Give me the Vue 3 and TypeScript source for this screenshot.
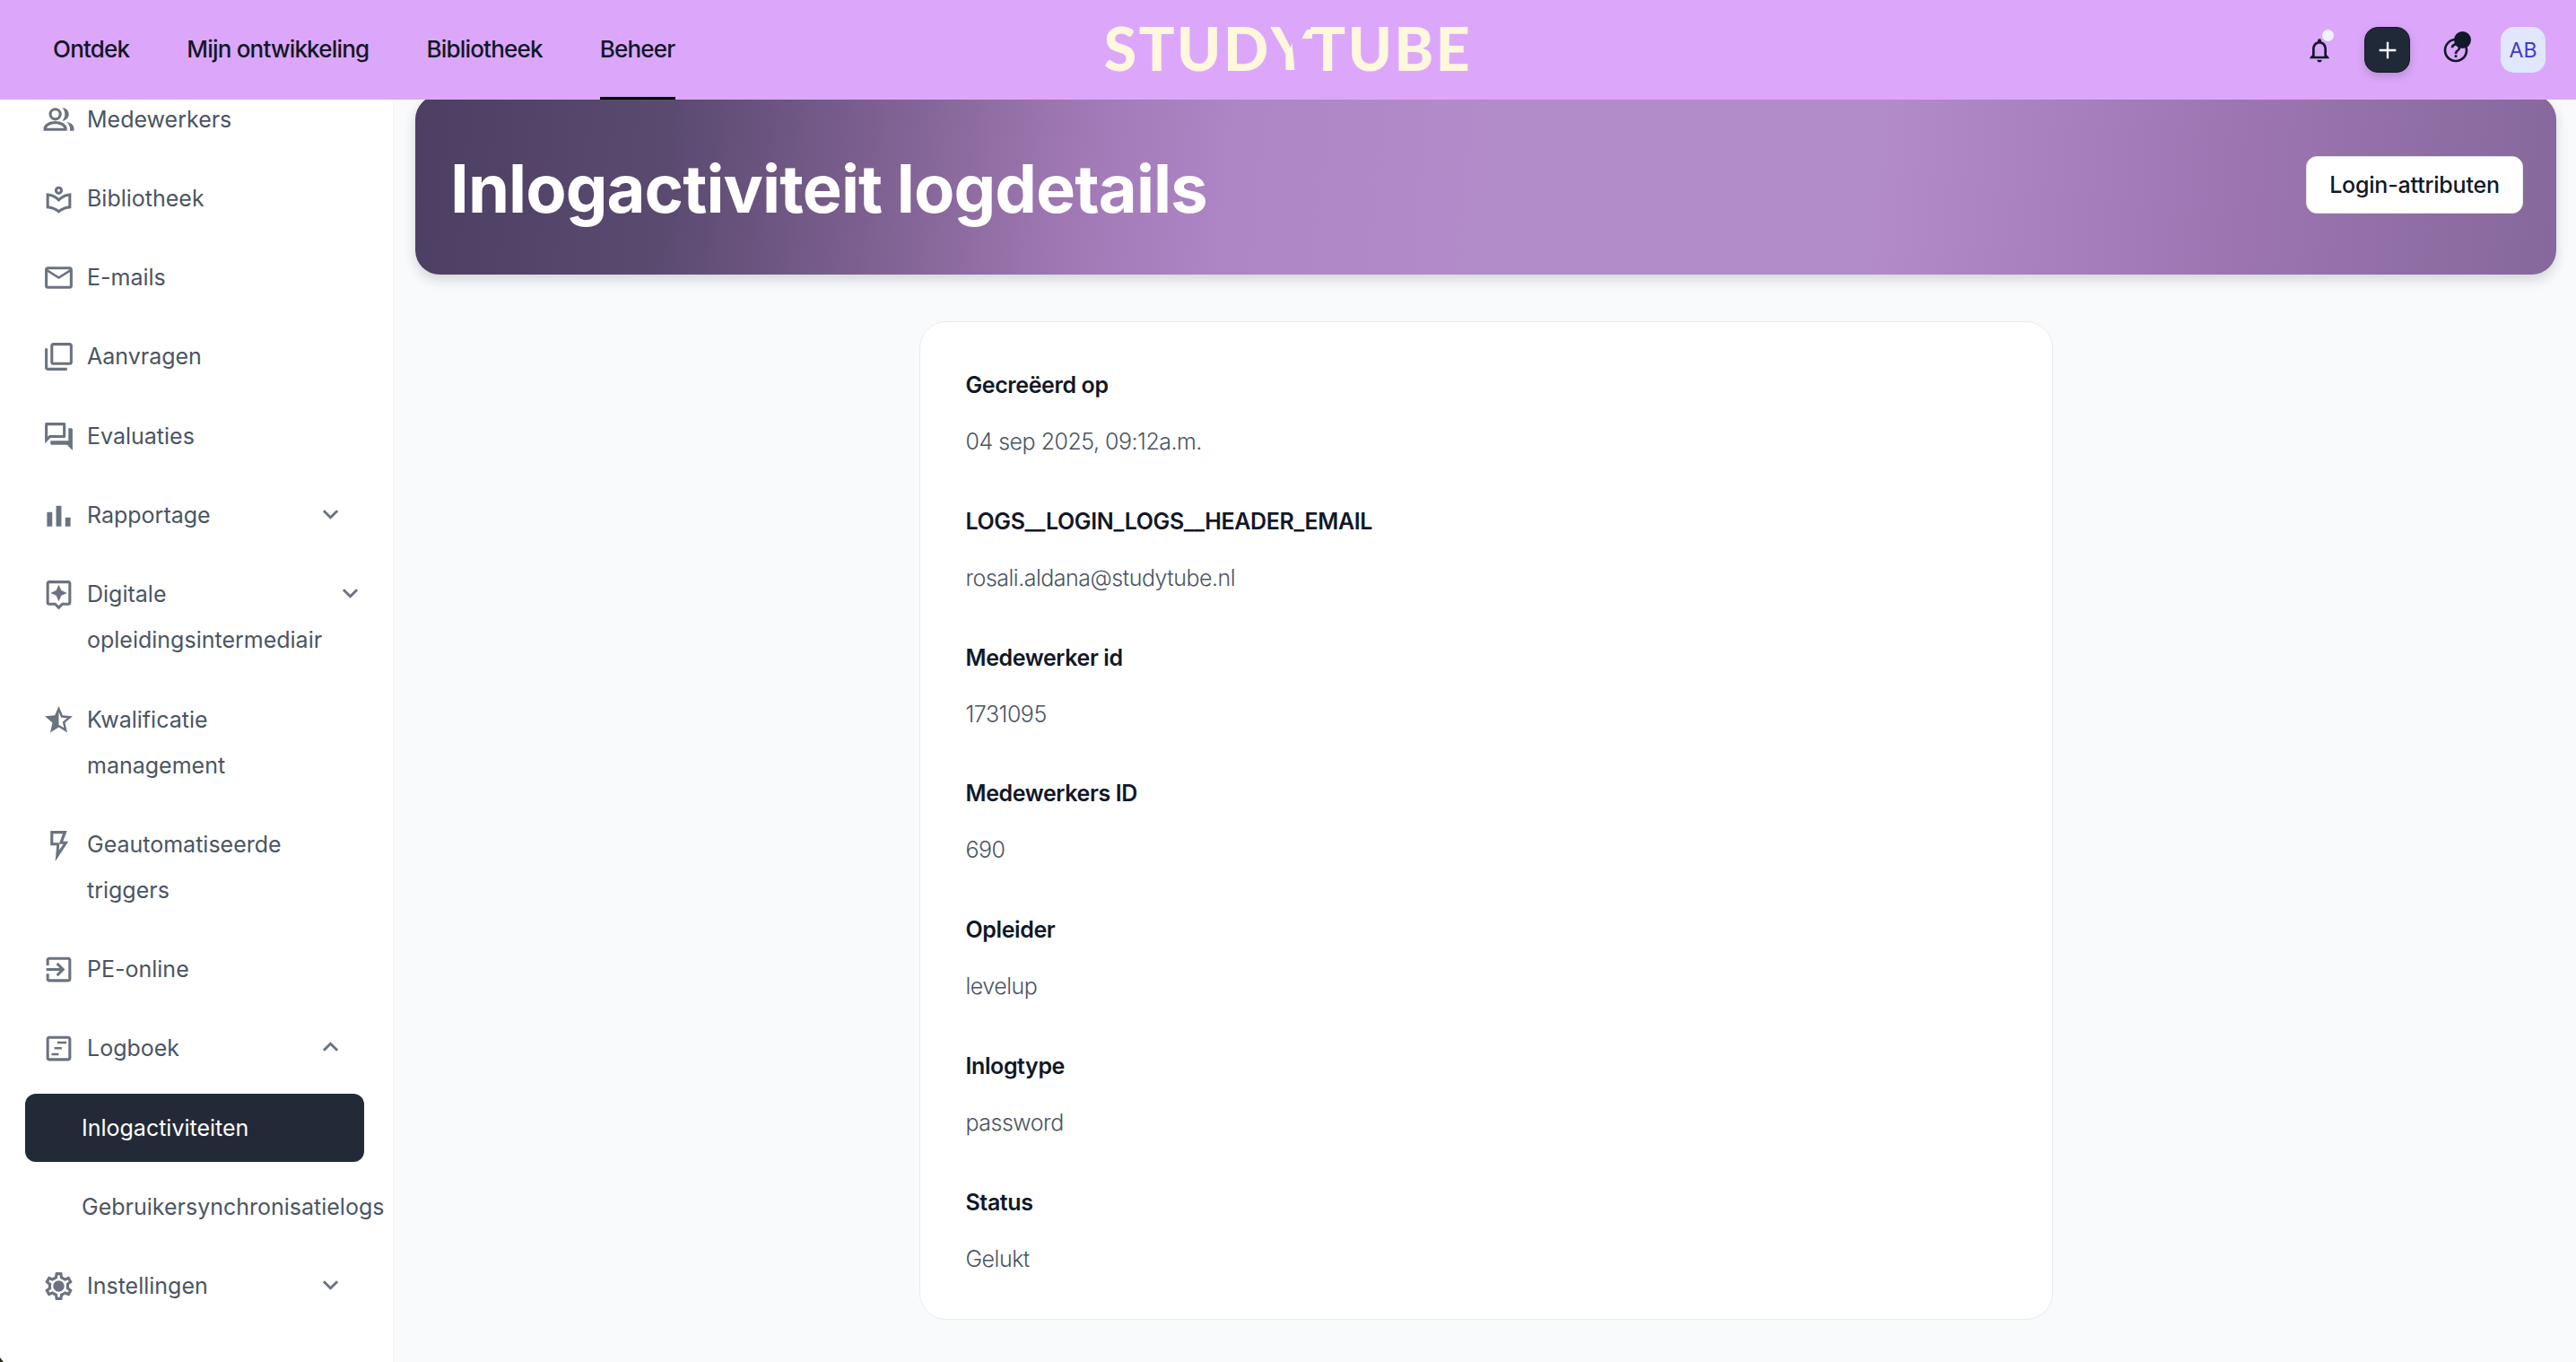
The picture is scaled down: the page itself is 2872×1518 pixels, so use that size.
<script setup lang="ts">
interface NavItem {
  label: string
  path: string
  chevron?: 'up' | 'down'
}

const topLinks: string[] = ['Ontdek', 'Mijn ontwikkeling', 'Bibliotheek', 'Beheer']

const boxPath = 'M19 3H5c-1.100 0-2 .9-2 2v14c0 1.100.9 2 2 2h14c1.100 0 2-.9 2-2V5c0-1.100-.9-2-2-2zm0 16H5V5h14v14z'

const groupOne: NavItem[] = [
  { label: 'Medewerkers', path: 'M9.500 3.400a4.600 4.600 0 1 0 0 9.200 4.600 4.600 0 0 0 0-9.200zm0 2a2.600 2.600 0 1 1 0 5.200 2.600 2.600 0 0 1 0-5.200zM1 20v-1.500C1 15 5.500 13 9.500 13s8.500 2 8.500 5.500V20H1zm2.200-2h12.600c-.5-1.700-3.500-3-6.300-3s-5.800 1.300-6.300 3zM14.500 3.200c2.800.2 4.800 2.200 4.800 4.800s-2 4.600-4.800 4.800c1.200-1.200 1.900-2.900 1.900-4.800s-.7-3.600-1.900-4.800zM17.500 13.500c3 .6 5.500 2.200 5.500 5V20h-2.900v-1.500c0-2-1-3.700-2.600-5z' },
  { label: 'Bibliotheek', path: 'M12 9c1.660 0 3-1.340 3-3s-1.340-3-3-3-3 1.340-3 3 1.340 3 3 3zm0-4c.55 0 1 .45 1 1s-.45 1-1 1-1-.45-1-1 .45-1 1-1zm0 6.550C9.640 9.350 6.480 8 3 8v11c3.480 0 6.640 1.350 9 3.550 2.360-2.190 5.520-3.550 9-3.550V8c-3.480 0-6.640 1.350-9 3.550zm7 5.580c-2.530.34-4.930 1.300-7 2.820-2.060-1.520-4.470-2.490-7-2.830v-6.950c2.100.38 4.050 1.350 5.640 2.830L12 14.280l1.360-1.270c1.590-1.480 3.540-2.450 5.640-2.830v6.950z' },
  { label: 'E-mails', path: 'M22 6c0-1.100-.9-2-2-2H4c-1.100 0-2 .9-2 2v12c0 1.100.9 2 2 2h16c1.100 0 2-.9 2-2V6zm-2 0l-8 5-8-5h16zm0 12H4V8l8 5 8-5v10z' },
  { label: 'Aanvragen', path: 'M4 6H2v14c0 1.100.9 2 2 2h14v-2H4V6zm16-4H8c-1.100 0-2 .9-2 2v12c0 1.100.9 2 2 2h12c1.100 0 2-.9 2-2V4c0-1.100-.9-2-2-2zm0 14H8V4h12v12z' },
  { label: 'Evaluaties', path: 'M15 4v7H5.170L4 12.170V4h11m1-2H3c-.55 0-1 .45-1 1v14l4-4h10c.55 0 1-.45 1-1V3c0-.55-.45-1-1-1zm5 4h-2v9H6v2c0 .55.45 1 1 1h11l4 4V7c0-.55-.45-1-1-1z' },
  { label: 'Rapportage', chevron: 'down', path: 'M3.500 9.500h3.800V20H3.500zM10.100 5h3.800v15h-3.800zM16.700 13.500h3.800V20h-3.800z' },
  { label: 'Digitale opleidingsintermediair', chevron: 'down', path: 'M19 2H5c-1.100 0-2 .9-2 2v14c0 1.100.9 2 2 2h4l3 3 3-3h4c1.100 0 2-.9 2-2V4c0-1.100-.9-2-2-2zm0 16h-4.830l-.59.59L12 20.170l-1.590-1.590-.58-.58H5V4h14v14zm-7-1l1.880-4.120L18 11l-4.120-1.880L12 5l-1.880 4.120L6 11l4.120 1.880z' },
  { label: 'Kwalificatie management', path: 'M22 9.240l-7.190-.62L12 2 9.190 8.630 2 9.240l5.460 4.730L5.820 21 12 17.270 18.180 21l-1.630-7.030L22 9.240zM12 15.400V6.100l1.710 4.040 4.380.38-3.320 2.880 1 4.280L12 15.400z' },
  { label: 'Geautomatiseerde triggers', path: 'M6 2h12l-2.900 7.500H19L9.500 24l1-11.500H6V2zm2 2v6.500h4.600l-.5 5.600 3.300-4.600h-3.300L14.900 4H8z' },
  { label: 'PE-online', path: 'M10.090 15.590L11.500 17l5-5-5-5-1.410 1.410L12.670 11H3v2h9.670l-2.580 2.590zM19 3H5c-1.110 0-2 .9-2 2v4h2V5h14v14H5v-4H3v4c0 1.100.89 2 2 2h14c1.100 0 2-.9 2-2V5c0-1.100-.9-2-2-2z' },
  { label: 'Logboek', chevron: 'up', path: boxPath + 'M11 7h6.500v1.600H11zM8.800 11h5.400v1.600H8.800zM6.800 15.400h5.200V17H6.800z' },
]

const settingsPath = 'M19.430 12.980c.04-.32.07-.64.07-.98 0-.34-.03-.66-.07-.98l2.110-1.650c.19-.15.24-.42.12-.64l-2-3.460c-.09-.16-.26-.25-.44-.25-.06 0-.12.01-.17.03l-2.490 1c-.52-.4-1.080-.73-1.690-.98l-.38-2.650C14.460 2.180 14.250 2 14 2h-4c-.25 0-.46.18-.49.42l-.38 2.650c-.61.25-1.170.59-1.690.98l-2.490-1c-.06-.02-.12-.03-.18-.03-.17 0-.34.09-.43.25l-2 3.460c-.13.22-.07.49.12.64l2.110 1.650c-.04.32-.07.65-.07.98 0 .33.03.66.07.98l-2.110 1.650c-.19.15-.24.42-.12.64l2 3.460c.09.16.26.25.44.25.06 0 .12-.01.17-.03l2.490-1c.52.4 1.080.73 1.690.98l.38 2.650c.03.24.24.42.49.42h4c.25 0 .46-.18.49-.42l.38-2.650c.61-.25 1.170-.59 1.690-.98l2.490 1c.06.02.12.03.18.03.17 0 .34-.09.43-.25l2-3.460c.12-.22.07-.49-.12-.64l-2.110-1.650zm-1.980-1.710c.04.31.05.52.05.73 0 .21-.02.43-.05.73l-.14 1.130.89.7 1.080.84-.7 1.210-1.270-.51-1.040-.42-.9.68c-.43.32-.84.56-1.250.73l-1.060.43-.16 1.130-.2 1.350h-1.400l-.19-1.350-.16-1.130-1.060-.43c-.43-.18-.83-.41-1.230-.71l-.91-.7-1.060.43-1.270.51-.7-1.210 1.080-.84.89-.7-.14-1.130c-.03-.31-.05-.54-.05-.74s.02-.43.05-.73l.14-1.130-.89-.7-1.080-.84.7-1.210 1.270.51 1.040.42.9-.68c.43-.32.84-.56 1.250-.73l1.060-.43.16-1.130.2-1.350h1.390l.19 1.350.16 1.130 1.060.43c.43.18.83.41 1.230.71l.91.7 1.060-.43 1.270-.51.7 1.210-1.070.85-.89.7.14 1.130zM12 8c-2.210 0-4 1.790-4 4s1.790 4 4 4 4-1.790 4-4-1.790-4-4-4z'

const fields: { label: string; value: string }[] = [
  { label: 'Gecreëerd op', value: '04 sep 2025, 09:12a.m.' },
  { label: 'LOGS__LOGIN_LOGS__HEADER_EMAIL', value: 'rosali.aldana@studytube.nl' },
  { label: 'Medewerker id', value: '1731095' },
  { label: 'Medewerkers ID', value: '690' },
  { label: 'Opleider', value: 'levelup' },
  { label: 'Inlogtype', value: 'password' },
  { label: 'Status', value: 'Gelukt' },
]
</script>

<template>
  <div class="page">
    <header class="topbar">
      <nav class="toplinks">
        <a v-for="(link, i) in topLinks" :key="link" class="toplink" :class="{ current: i === 3 }">{{ link }}</a>
      </nav>
      <div class="logo" aria-label="Studytube"><span>STUD</span><span class="logo-y">Y</span><span class="logo-t">T</span><span>UBE</span></div>
      <div class="tools">
        <button class="tool bell">
          <svg viewBox="0 0 24 24" class="tool-icon"><path d="M12 22c1.100 0 2-.9 2-2h-4c0 1.100.9 2 2 2zm6-6v-5c0-3.070-1.630-5.640-4.500-6.320V4c0-.83-.67-1.500-1.500-1.500s-1.500.67-1.500 1.500v.68C7.640 5.360 6 7.920 6 11v5l-2 2v1h16v-1l-2-2zm-2 1H8v-6c0-2.480 1.510-4.500 4-4.500s4 2.020 4 4.500v6z" /></svg>
          <span class="bell-dot"></span>
        </button>
        <button class="tool plus">
          <svg viewBox="0 0 24 24" class="plus-icon"><path d="M11 4h2v7h7v2h-7v7h-2v-7H4v-2h7z" /></svg>
        </button>
        <button class="tool help">
          <svg viewBox="0 0 24 24" class="tool-icon"><path d="M11 18h2v-2h-2v2zm1-16C6.480 2 2 6.480 2 12s4.480 10 10 10 10-4.480 10-10S17.520 2 12 2zm0 18c-4.410 0-8-3.590-8-8s3.590-8 8-8 8 3.590 8 8-3.590 8-8 8zm0-14c-2.210 0-4 1.790-4 4h2c0-1.100.9-2 2-2s2 .9 2 2c0 2-3 1.750-3 5h2c0-2.250 3-2.500 3-5 0-2.210-1.790-4-4-4z" /></svg>
          <span class="help-dot"></span>
        </button>
        <div class="tool avatar">AB</div>
      </div>
    </header>

    <div class="body">
      <aside class="sidebar">
        <ul class="menu">
          <li v-for="item in groupOne" :key="item.label" class="item">
            <svg viewBox="0 0 24 24" class="item-icon"><path fill-rule="evenodd" :d="item.path" /></svg>
            <span class="item-label">{{ item.label }}</span>
            <svg v-if="item.chevron" viewBox="0 0 20 12" class="chev" :class="{ up: item.chevron === 'up' }"><path d="M2 2l8 8 8-8" /></svg>
          </li>
          <li class="item sub active"><span class="item-label">Inlogactiviteiten</span></li>
          <li class="item sub"><span class="item-label nowrap">Gebruikersynchronisatielogs</span></li>
          <li class="item">
            <svg viewBox="0 0 24 24" class="item-icon"><path fill-rule="evenodd" :d="settingsPath" /></svg>
            <span class="item-label">Instellingen</span>
            <svg viewBox="0 0 20 12" class="chev"><path d="M2 2l8 8 8-8" /></svg>
          </li>
        </ul>
        <span class="corner"></span>
      </aside>

      <main class="main">
        <section class="hero">
          <h1 class="title">Inlogactiviteit logdetails</h1>
          <button class="hero-btn">Login-attributen</button>
        </section>
        <section class="card">
          <div v-for="f in fields" :key="f.label" class="field">
            <div class="field-label">{{ f.label }}</div>
            <div class="field-value">{{ f.value }}</div>
          </div>
        </section>
      </main>
    </div>
  </div>
</template>

<style scoped>
.page {
  width: 2872px;
  height: 1518px;
  display: flex;
  flex-direction: column;
  overflow: hidden;
  font-family: Inter, "Liberation Sans", sans-serif;
  background: #f9fafb;
}
.topbar {
  position: relative;
  z-index: 2;
  flex: 0 0 111px;
  display: grid;
  grid-template-columns: 1fr auto 1fr;
  align-items: center;
  padding: 0 34px;
  background: #dca7fa;
}
.toplinks {
  display: flex;
  gap: 64px;
  height: 100%;
  padding-left: 25px;
}
.toplink {
  position: relative;
  display: flex;
  align-items: center;
  padding-bottom: 3px;
  font-size: 26px;
  font-weight: 500;
  letter-spacing: -0.8px;
  color: #111827;
}
.toplink.current::after {
  content: "";
  position: absolute;
  left: 0;
  right: 0;
  bottom: 0;
  height: 3px;
  background: #000;
}
.logo {
  display: flex;
  align-items: center;
  height: 48px;
  margin-top: -3px;
  font-family: Lato, sans-serif;
  font-size: 66px;
  font-weight: 900;
  line-height: 48px;
  letter-spacing: 2.6px;
  color: #fff8dc;
}
.logo-y {
  letter-spacing: 0;
  clip-path: polygon(0 0, 50% 0, 62% 100%, 0 100%);
}
.logo-t {
  position: relative;
}
.logo-t::before {
  content: "";
  position: absolute;
  left: -9px;
  top: 3px;
  width: 12px;
  height: 10px;
  background: #fff8dc;
  clip-path: polygon(50% 0, 100% 0, 100% 100%, 0 100%);
}
.tools {
  display: flex;
  justify-content: flex-end;
  align-items: center;
  gap: 25px;
}
.tool {
  position: relative;
  flex: 0 0 51px;
  width: 51px;
  height: 51px;
  padding: 0;
  display: flex;
  align-items: center;
  justify-content: center;
  border: 0;
  border-radius: 15px;
  background: transparent;
}
.tool-icon {
  width: 32px;
  height: 32px;
  fill: #111827;
}
.bell-dot {
  position: absolute;
  left: 29px;
  top: 3px;
  width: 13px;
  height: 13px;
  border-radius: 50%;
  background: #eef2ff;
}
.help-dot {
  position: absolute;
  left: 24px;
  top: 5px;
  width: 19px;
  height: 19px;
  border-radius: 50%;
  background: #111827;
}
.plus {
  background: #1f2937;
  border: 1px solid #111827;
  box-shadow: 0 4px 10px rgba(17, 24, 39, 0.18);
}
.plus-icon {
  width: 28px;
  height: 28px;
  fill: #fff;
}
.avatar {
  flex-basis: 50px;
  width: 50px;
  background: #e0e7ff;
  color: #4338ca;
  font-size: 23px;
}
.body {
  flex: 1;
  min-height: 0;
  display: flex;
}
.sidebar {
  position: relative;
  flex: 0 0 439px;
  overflow: hidden;
  background: #fff;
  border-right: 1px solid #f3f4f6;
  box-sizing: border-box;
  padding-left: 28px;
}
.menu {
  width: 378px;
  margin: -16px 0 0;
  padding: 0;
  list-style: none;
  display: flex;
  flex-direction: column;
  gap: 12px;
}
.item {
  display: flex;
  align-items: flex-start;
  padding: 12.65px 28px 12.65px 18.5px;
  border-radius: 12px;
  font-size: 25px;
  line-height: 51px;
  color: #4b5563;
}
.item-icon {
  flex: 0 0 37px;
  width: 37px;
  height: 37px;
  margin: 7px 13.5px 0 0;
  fill: #6b7280;
}
.item-label {
  flex: 1;
}
.nowrap {
  white-space: nowrap;
}
.chev {
  flex: 0 0 19px;
  width: 19px;
  height: 12px;
  margin: 18px 0 0 22px;
  fill: none;
  stroke: #6b7280;
  stroke-width: 3;
}
.chev.up {
  transform: rotate(180deg);
}
.sub {
  padding-left: 63px;
}
.active {
  background: #232a37;
  color: #fff;
}
.corner {
  position: absolute;
  left: 0;
  bottom: 0;
  width: 4px;
  height: 5px;
  background: #2b2b1e;
  clip-path: polygon(0 0, 100% 100%, 0 100%);
}
.main {
  flex: 1;
  min-width: 0;
  overflow: hidden;
  padding: 0 22px 0 24px;
}
.hero {
  height: 200px;
  margin-top: -5px;
  box-sizing: border-box;
  padding: 0 37px 0 39px;
  display: flex;
  align-items: center;
  justify-content: space-between;
  border-radius: 27px;
  background: linear-gradient(96deg, #4c3f62 0%, #5a4a70 12%, #7f6192 22%, #a079b4 31%, #ae85c5 38%, #b28bc9 50%, #b28bc9 68%, #9f77b3 83%, #86689c 100%);
  box-shadow: 0 6px 14px rgba(17, 24, 39, 0.16);
}
.title {
  margin: 8px 0 0;
  font-size: 74px;
  line-height: 1;
  font-weight: 700;
  letter-spacing: -0.9px;
  color: #fff;
}
.hero-btn {
  width: 242px;
  height: 64px;
  padding: 0;
  border: 1px solid #e5e7eb;
  border-radius: 12px;
  background: #fff;
  font-family: inherit;
  font-size: 25px;
  font-weight: 500;
  letter-spacing: -0.2px;
  color: #111827;
}
.card {
  box-sizing: border-box;
  width: 1264px;
  height: 1113px;
  margin: 52px auto 0;
  padding: 52px 51px 0;
  background: #fff;
  border: 1px solid #e9ebef;
  border-radius: 30px;
  display: flex;
  flex-direction: column;
  gap: 52.8px;
}
.field {
  display: flex;
  flex-direction: column;
  gap: 27px;
}
.field-label {
  font-size: 25px;
  line-height: 36px;
  font-weight: 600;
  letter-spacing: -0.4px;
  color: #111827;
}
.field-value {
  font-size: 25px;
  line-height: 36px;
  font-weight: 300;
  letter-spacing: -0.5px;
  color: #4b5563;
}
</style>
